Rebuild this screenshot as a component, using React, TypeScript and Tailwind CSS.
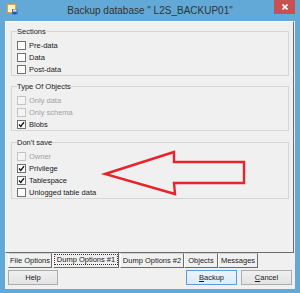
import React from 'react';

type Row = { label: string; checked?: boolean; disabled?: boolean };

const sections: { title: string; rows: Row[]; mt: string }[] = [
    {
        title: 'Sections',
        mt: 'mt-[5px]',
        rows: [{ label: 'Pre-data' }, { label: 'Data' }, { label: 'Post-data' }],
    },
    {
        title: 'Type Of Objects',
        mt: 'mt-[6px]',
        rows: [
            { label: 'Only data', disabled: true },
            { label: 'Only schema', disabled: true },
            { label: 'Blobs', checked: true },
        ],
    },
    {
        title: "Don't save",
        mt: 'mt-[7px]',
        rows: [
            { label: 'Owner', disabled: true },
            { label: 'Privilege', checked: true },
            { label: 'Tablespace', checked: true },
            { label: 'Unlogged table data' },
        ],
    },
];

const tabs = [
    { label: 'File Options', w: 'w-[44px]' },
    { label: 'Dump Options #1', w: 'w-[66px]', active: true },
    { label: 'Dump Options #2', w: 'w-[64px]' },
    { label: 'Objects', w: 'w-[34px]' },
    { label: 'Messages', w: 'w-[40px]' },
];

const CheckBox: React.FC<Row> = ({ label, checked, disabled }) => (
    <div className="h-[12px] flex items-center gap-[3px]">
        <div
            className={`w-[9px] h-[9px] border flex items-center justify-center ${
                disabled ? 'border-[#c4c4c4] bg-[#f4f4f4]' : 'border-[#707070] bg-white'
            }`}
        >
            {checked && (
                <svg width="7" height="7" viewBox="0 0 7 7">
                    <path d="M1 3.5 L2.8 5.4 L6 1.2" fill="none" stroke="#111" strokeWidth="1.4" />
                </svg>
            )}
        </div>
        <span className={disabled ? 'text-[#a2a2a2]' : 'text-[#1a1a1a]'}>{label}</span>
    </div>
);

const WindowIcon = () => (
    <svg width="11" height="11" viewBox="0 0 11 11">
        <rect x="0.5" y="0.5" width="8" height="8" fill="#fdf3c8" stroke="#d9a74a" />
        <rect x="5" y="5" width="5.5" height="5.5" fill="#2f73c9" />
        <rect x="6" y="5.5" width="3.5" height="2" fill="#dfe9f7" />
        <rect x="6.5" y="8.5" width="2.5" height="1.5" fill="#1c4f94" />
    </svg>
);

export default function App() {
    return (
        <div className="w-[300px] h-[293px] bg-[#62a9d8] flex flex-col font-['Liberation_Sans',Arial,sans-serif] text-[7.5px] leading-[9px]">
            <div className="h-[21px] grid grid-cols-[1fr_auto_1fr] items-start">
                <div className="pl-[7px] pt-[4px]">
                    <WindowIcon />
                </div>
                <div className="pt-[4px] text-[10px] leading-[13px] text-[#333]">
                    Backup database " L2S_BACKUP01"
                </div>
                <div className="flex justify-end pr-[5px]">
                    <div className="w-[21px] h-[14px] bg-[#c75050] flex items-center justify-center">
                        <svg width="6" height="6" viewBox="0 0 6 6">
                            <path d="M0.5 0.5 L5.5 5.5 M5.5 0.5 L0.5 5.5" stroke="#fff" strokeWidth="1.6" />
                        </svg>
                    </div>
                </div>
            </div>

            <div className="mx-[5px] h-[268px] bg-[#f0f0f0] flex flex-col">
                <div className="relative w-[289px] h-[232px] border-t border-l border-t-white border-l-white border-r border-b border-r-[#6b6b6b] border-b-[#6b6b6b] pl-[5px] pr-[4px] pt-[0px] flex flex-col">
                    {sections.map((s) => (
                        <fieldset
                            key={s.title}
                            className={`${s.mt} border border-[#d5d5d5] pl-[5px] pt-[3px]`}
                        >
                            <legend className="text-[#1a1a1a] leading-[9px]">{s.title}</legend>
                            {s.rows.map((r) => (
                                <CheckBox key={r.label} {...r} />
                            ))}
                        </fieldset>
                    ))}

                    <svg className="absolute left-0 top-0 pointer-events-none" width="287" height="230" viewBox="0 0 287 230">
                        <path
                            d="M99 152 L168 130 L168 140 L238 140 L238 161 L168 161 L169 172 Z"
                            fill="none"
                            stroke="#e8232b"
                            strokeWidth="2.4"
                            strokeLinejoin="miter"
                        />
                    </svg>
                </div>

                <div className="h-[15px] flex pl-[3px]">
                    {tabs.map((t) => (
                        <div
                            key={t.label}
                            className={`${t.w} h-[15px] flex items-center justify-center border-l border-l-white border-r border-b border-r-[#6b6b6b] border-b-[#6b6b6b] bg-[#f0f0f0] text-[#1a1a1a] ${
                                t.active ? 'mx-[1px] -mt-[1px] h-[16px]' : 'border-t border-t-[#d0d0d0]'
                            }`}
                        >
                            <span className={t.active ? 'outline outline-1 outline-dotted outline-[#333] px-[2px]' : ''}>
                                {t.label}
                            </span>
                        </div>
                    ))}
                </div>

                <div className="mt-[2px] flex px-[3px]">
                    <button className="w-[50px] h-[15px] border border-[#acacac] bg-gradient-to-b from-[#f0f0f0] to-[#e3e3e3] text-[#1a1a1a]">
                        Help
                    </button>
                    <div className="flex-1" />
                    <button className="w-[51px] h-[15px] border border-[#569de5] bg-gradient-to-b from-[#ecf4fc] to-[#dcecfc] text-[#1a1a1a]">
                        <span className="underline">B</span>ackup
                    </button>
                    <button className="ml-[4px] w-[51px] h-[15px] border border-[#acacac] bg-gradient-to-b from-[#f0f0f0] to-[#e3e3e3] text-[#1a1a1a]">
                        <span className="underline">C</span>ancel
                    </button>
                </div>
            </div>
        </div>
    );
}
